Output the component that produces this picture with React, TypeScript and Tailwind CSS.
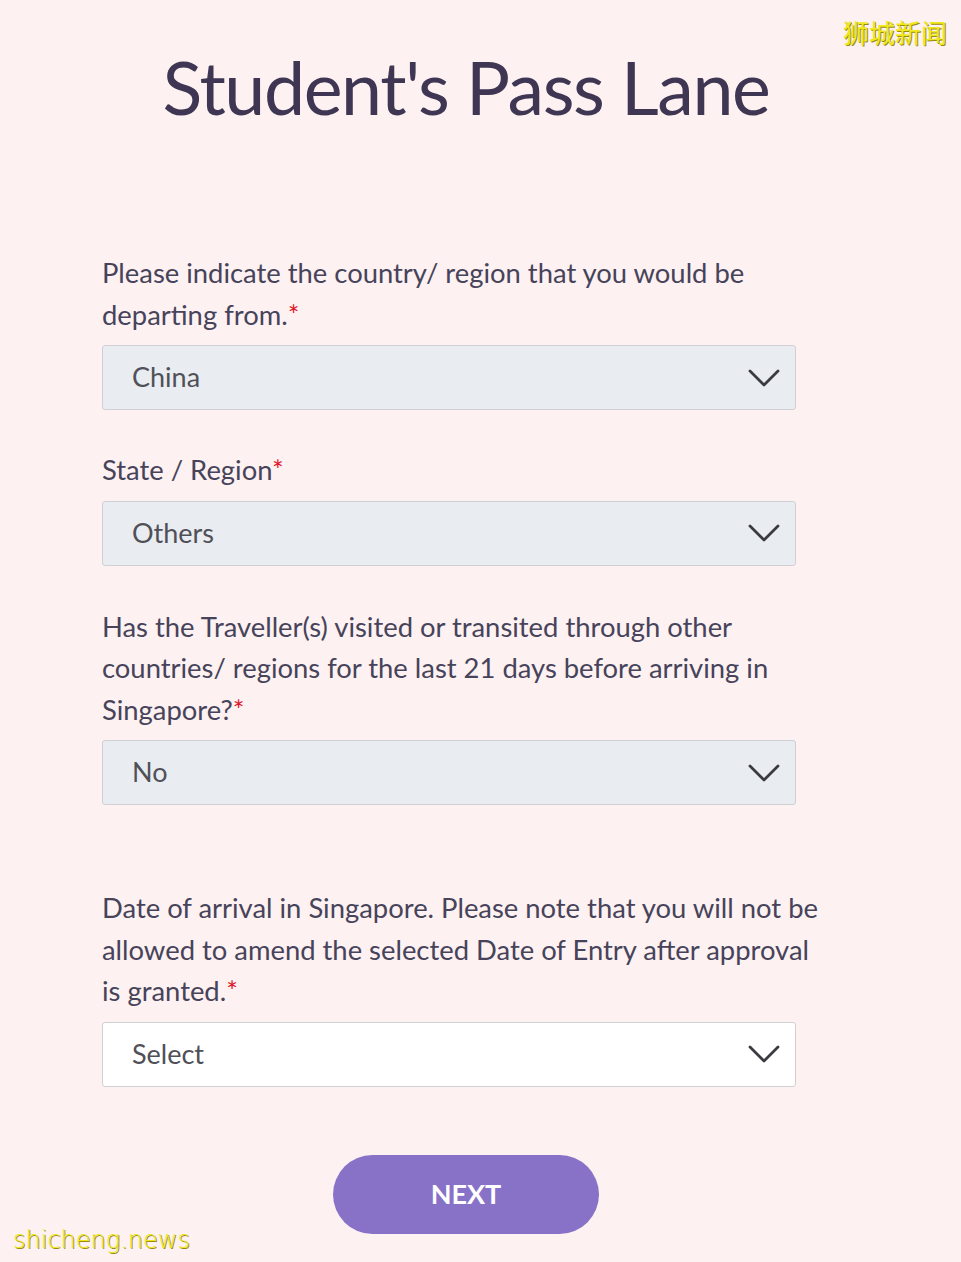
type Field = {
  label: string;
  value: string;
  disabled?: boolean;
  gapTop: string;
};

const fields: Field[] = [
  {
    label: 'Please indicate the country/ region that you would be departing from.',
    value: 'China',
    disabled: true,
    gapTop: 'mt-0',
  },
  { label: 'State / Region', value: 'Others', disabled: true, gapTop: 'mt-[39px]' },
  {
    label:
      'Has the Traveller(s) visited or transited through other countries/ regions for the last 21 days before arriving in Singapore?',
    value: 'No',
    disabled: true,
    gapTop: 'mt-[40px]',
  },
  {
    label:
      'Date of arrival in Singapore. Please note that you will not be allowed to amend the selected Date of Entry after approval is granted.',
    value: 'Select',
    gapTop: 'mt-[82px]',
  },
];

function Chevron() {
  return (
    <svg width="32" height="20" viewBox="0 0 32 20" fill="none" className="text-[#3a3a40]">
      <polyline points="2,3 16,17 30,3" stroke="currentColor" strokeWidth="2.8" strokeLinecap="round" strokeLinejoin="round" />
    </svg>
  );
}

function SelectBox({ value, disabled }: { value: string; disabled?: boolean }) {
  return (
    <div
      className={`mt-[10px] flex h-[65px] w-[694px] items-center justify-between rounded-[3px] border border-[#cfcfd4] pl-[29px] pr-[15px] ${
        disabled ? 'bg-[#e9ecf0]' : 'bg-white'
      }`}
    >
      <span className="text-[27px] text-[#505058]">{value}</span>
      <Chevron />
    </div>
  );
}

export default function App() {
  return (
    <div className="relative min-h-[1262px] w-full bg-[#fdf1f1] font-['Lato','Noto_Sans',sans-serif]">
      <div className="absolute right-[14px] top-[12px] font-['Noto_Sans_CJK_SC',sans-serif] text-[26px] text-[#eee81c] [text-shadow:1px_1px_0_#9a8a10]">
        狮城新闻
      </div>

      <div className="ml-[102px] w-[728px] pt-[41px]">
        <h1 className="text-center text-[73.5px] leading-[92px] tracking-[-1.4px] text-[#3e3652]">
          Student&apos;s Pass Lane
        </h1>

        <div className="mt-[119px]">
          {fields.map((f) => (
            <div key={f.label} className={f.gapTop}>
              <p className="text-[27.4px] leading-[41.5px] text-[#46435a]">
                {f.label}
                <span className="text-[#e0162b]">*</span>
              </p>
              <SelectBox value={f.value} disabled={f.disabled} />
            </div>
          ))}
        </div>

        <div className="mt-[68px] flex justify-center">
          <button className="h-[79px] w-[266px] rounded-full bg-[#8872c8] text-[27px] font-bold text-white">
            NEXT
          </button>
        </div>
      </div>

      <div className="absolute bottom-[4px] left-[13px] font-['DejaVu_Sans',sans-serif] text-[24px] font-light text-[#eee81c] [text-shadow:1px_1px_0_#9a8a10]">
        shicheng.news
      </div>
    </div>
  );
}
